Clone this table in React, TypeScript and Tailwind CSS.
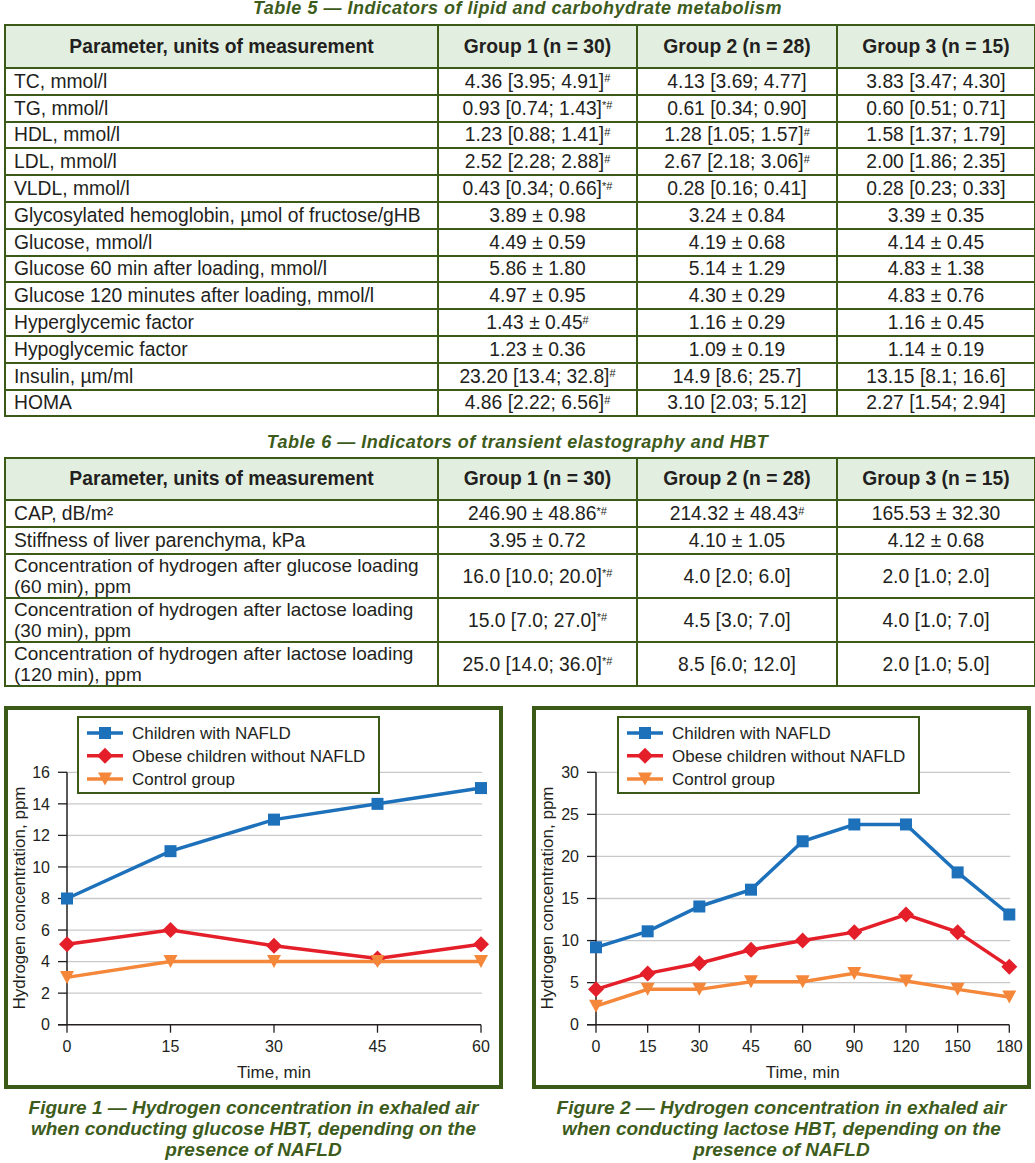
import React from 'react';

type Cell = [string, string?];
type Row = { label: React.ReactNode; cells: Cell[]; h: string; multi?: boolean };

const table5: Row[] = [
  { label: 'TC, mmol/l', cells: [['4.36 [3.95; 4.91]', '#'], ['4.13 [3.69; 4.77]'], ['3.83 [3.47; 4.30]']], h: 'h-[26.8px]' },
  { label: 'TG, mmol/l', cells: [['0.93 [0.74; 1.43]', '*#'], ['0.61 [0.34; 0.90]'], ['0.60 [0.51; 0.71]']], h: 'h-[26.8px]' },
  { label: 'HDL, mmol/l', cells: [['1.23 [0.88; 1.41]', '#'], ['1.28 [1.05; 1.57]', '#'], ['1.58 [1.37; 1.79]']], h: 'h-[26.8px]' },
  { label: 'LDL, mmol/l', cells: [['2.52 [2.28; 2.88]', '#'], ['2.67 [2.18; 3.06]', '#'], ['2.00 [1.86; 2.35]']], h: 'h-[26.8px]' },
  { label: 'VLDL, mmol/l', cells: [['0.43 [0.34; 0.66]', '*#'], ['0.28 [0.16; 0.41]'], ['0.28 [0.23; 0.33]']], h: 'h-[26.8px]' },
  { label: 'Glycosylated hemoglobin, µmol of fructose/gHB', cells: [['3.89 ± 0.98'], ['3.24 ± 0.84'], ['3.39 ± 0.35']], h: 'h-[26.8px]' },
  { label: 'Glucose, mmol/l', cells: [['4.49 ± 0.59'], ['4.19 ± 0.68'], ['4.14 ± 0.45']], h: 'h-[26.8px]' },
  { label: 'Glucose 60 min after loading, mmol/l', cells: [['5.86 ± 1.80'], ['5.14 ± 1.29'], ['4.83 ± 1.38']], h: 'h-[26.8px]' },
  { label: 'Glucose 120 minutes after loading, mmol/l', cells: [['4.97 ± 0.95'], ['4.30 ± 0.29'], ['4.83 ± 0.76']], h: 'h-[26.8px]' },
  { label: 'Hyperglycemic factor', cells: [['1.43 ± 0.45', '#'], ['1.16 ± 0.29'], ['1.16 ± 0.45']], h: 'h-[26.8px]' },
  { label: 'Hypoglycemic factor', cells: [['1.23 ± 0.36'], ['1.09 ± 0.19'], ['1.14 ± 0.19']], h: 'h-[26.8px]' },
  { label: 'Insulin, µm/ml', cells: [['23.20 [13.4; 32.8]', '#'], ['14.9 [8.6; 25.7]'], ['13.15 [8.1; 16.6]']], h: 'h-[26.8px]' },
  { label: 'HOMA', cells: [['4.86 [2.22; 6.56]', '#'], ['3.10 [2.03; 5.12]'], ['2.27 [1.54; 2.94]']], h: 'h-[26.8px]' },
];

const table6: Row[] = [
  { label: 'CAP, dB/m²', cells: [['246.90 ± 48.86', '*#'], ['214.32 ± 48.43', '#'], ['165.53 ± 32.30']], h: 'h-[27px]' },
  { label: 'Stiffness of liver parenchyma, kPa', cells: [['3.95 ± 0.72'], ['4.10 ± 1.05'], ['4.12 ± 0.68']], h: 'h-[27px]' },
  {
    label: <>Concentration of hydrogen after glucose loading<br />(60 min), ppm</>,
    cells: [['16.0 [10.0; 20.0]', '*#'], ['4.0 [2.0; 6.0]'], ['2.0 [1.0; 2.0]']],
    h: 'h-[44px]',
    multi: true,
  },
  {
    label: <>Concentration of hydrogen after lactose loading<br />(30 min), ppm</>,
    cells: [['15.0 [7.0; 27.0]', '*#'], ['4.5 [3.0; 7.0]'], ['4.0 [1.0; 7.0]']],
    h: 'h-[43px]',
    multi: true,
  },
  {
    label: <>Concentration of hydrogen after lactose loading<br />(120 min), ppm</>,
    cells: [['25.0 [14.0; 36.0]', '*#'], ['8.5 [6.0; 12.0]'], ['2.0 [1.0; 5.0]']],
    h: 'h-[44px]',
    multi: true,
  },
];

const DataTable = ({ rows, head }: { rows: Row[]; head: string }) => (
  <table className="ml-[4px] w-[1030px] table-fixed border-collapse text-[19.3px] leading-[18px] text-[#231f20]">
    <colgroup>
      <col className="w-[433px]" />
      <col className="w-[199px]" />
      <col className="w-[200px]" />
      <col className="w-[198px]" />
    </colgroup>
    <thead>
      <tr className={`${head} bg-[#e2efe0]`}>
        <th className="border-2 border-[#3b5a17] font-bold">Parameter, units of measurement</th>
        <th className="border-2 border-[#3b5a17] font-bold">Group 1 (n = 30)</th>
        <th className="border-2 border-[#3b5a17] font-bold">Group 2 (n = 28)</th>
        <th className="border-2 border-[#3b5a17] font-bold">Group 3 (n = 15)</th>
      </tr>
    </thead>
    <tbody>
      {rows.map((row, i) => (
        <tr key={i} className={row.h}>
          {row.multi ? (
            <td className="border-2 border-[#3b5a17] px-[8px] py-0 text-left text-[19px] leading-[21px]">{row.label}</td>
          ) : (
            <td className="border-2 border-[#3b5a17] px-[8px] pt-[1px] text-left">{row.label}</td>
          )}
          {row.cells.map(([value, mark], j) => (
            <td key={j} className="border-2 border-[#3b5a17] pt-[1px] text-center whitespace-nowrap">
              {value}
              {mark && <sup className="text-[11px]">{mark}</sup>}
            </td>
          ))}
        </tr>
      ))}
    </tbody>
  </table>
);

type Series = { color: string; marker: 'square' | 'diamond' | 'triangle'; label: string; values: number[] };

const Marker = ({ kind, x, y, color }: { kind: Series['marker']; x: number; y: number; color: string }) => {
  if (kind === 'square') return <rect x={x - 6} y={y - 6} width={12} height={12} fill={color} />;
  if (kind === 'diamond')
    return <polygon points={`${x},${y - 8} ${x + 8},${y} ${x},${y + 8} ${x - 8},${y}`} fill={color} />;
  return <polygon points={`${x - 7},${y - 6.5} ${x + 7},${y - 6.5} ${x},${y + 6.5}`} fill={color} />;
};

const BLUE = '#1d70ba';
const RED = '#e41f2a';
const ORANGE = '#f4873a';

type ChartProps = {
  axisX: number;
  xEnd: number;
  labelRight: number;
  yMax: number;
  yStep: number;
  xLabels: string[];
  legendX: number;
  series: Series[];
};

const Chart = ({ axisX, xEnd, labelRight, yMax, yStep, xLabels, legendX, series }: ChartProps) => {
  const y0 = 314.7;
  const yTop = 62.3;
  const sy = (v: number) => y0 - ((y0 - yTop) * v) / yMax;
  const dx = (xEnd - axisX) / (xLabels.length - 1);
  const sx = (i: number) => axisX + dx * i;
  const ticks: number[] = [];
  for (let v = 0; v <= yMax; v += yStep) ticks.push(v);

  return (
    <svg width={491} height={375} className="block" fontFamily="'Liberation Sans', Arial, sans-serif">
      {ticks.slice(1).map((v) => (
        <line key={v} x1={axisX} x2={xEnd + 1} y1={sy(v)} y2={sy(v)} stroke="#c9c9c9" strokeWidth={1.3} />
      ))}
      <line x1={axisX} x2={axisX} y1={yTop} y2={y0} stroke="#231f20" strokeWidth={1.5} />
      <line x1={axisX - 9} x2={xEnd} y1={y0} y2={y0} stroke="#231f20" strokeWidth={1.5} />
      {ticks.map((v) => (
        <g key={v}>
          <line x1={axisX - 9} x2={axisX} y1={sy(v)} y2={sy(v)} stroke="#231f20" strokeWidth={1.3} />
          <text x={labelRight} y={sy(v)} dy="0.36em" textAnchor="end" fontSize={16} fill="#231f20">
            {v}
          </text>
        </g>
      ))}
      {xLabels.map((l, i) => (
        <g key={l}>
          <line x1={sx(i)} x2={sx(i)} y1={y0} y2={y0 + 8} stroke="#231f20" strokeWidth={1.3} />
          <text x={sx(i)} y={336} dy="0.36em" textAnchor="middle" fontSize={16} fill="#231f20">
            {l}
          </text>
        </g>
      ))}
      <text x={(axisX + xEnd) / 2} y={362} dy="0.36em" textAnchor="middle" fontSize={17} fill="#231f20">
        Time, min
      </text>
      <text
        transform="translate(11,188) rotate(-90)"
        dy="0.36em"
        textAnchor="middle"
        fontSize={17}
        fill="#231f20"
      >
        Hydrogen concentration, ppm
      </text>
      {series.map((s) => (
        <g key={s.label}>
          <polyline
            points={s.values.map((v, i) => `${sx(i)},${sy(v)}`).join(' ')}
            fill="none"
            stroke={s.color}
            strokeWidth={3.5}
          />
          {s.values.map((v, i) => (
            <Marker key={i} kind={s.marker} x={sx(i)} y={sy(v)} color={s.color} />
          ))}
        </g>
      ))}
      {/* legend */}
      <rect x={legendX + 1} y={7} width={301} height={76} fill="#ffffff" stroke="#3b5a17" strokeWidth={2} />
      {series.map((s, i) => {
        const y = [23, 45.7, 69][i];
        return (
          <g key={s.label}>
            <line x1={legendX + 10} x2={legendX + 46} y1={y} y2={y} stroke={s.color} strokeWidth={3.5} />
            <Marker kind={s.marker} x={legendX + 28} y={y} color={s.color} />
            <text x={legendX + 55} y={y} dy="0.36em" fontSize={17} fill="#231f20">
              {s.label}
            </text>
          </g>
        );
      })}
    </svg>
  );
};

const Figure = ({ chart, caption }: { chart: ChartProps; caption: React.ReactNode }) => (
  <div className="flex w-[499px] flex-col">
    <div className="h-[383px] w-[499px] border-4 border-[#3b5a17] bg-white">
      <Chart {...chart} />
    </div>
    <p className="mt-[8px] text-center text-[19px] leading-[21px] font-bold italic text-[#3d5c1c]">{caption}</p>
  </div>
);

const labels = ['Children with NAFLD', 'Obese children without NAFLD', 'Control group'];

const fig1: ChartProps = {
  axisX: 59,
  xEnd: 473,
  labelRight: 42,
  yMax: 16,
  yStep: 2,
  xLabels: ['0', '15', '30', '45', '60'],
  legendX: 69,
  series: [
    { color: BLUE, marker: 'square', label: labels[0], values: [8, 11, 13, 14, 15] },
    { color: RED, marker: 'diamond', label: labels[1], values: [5.1, 6, 5, 4.2, 5.1] },
    { color: ORANGE, marker: 'triangle', label: labels[2], values: [3, 4, 4, 4, 4] },
  ],
};

const fig2: ChartProps = {
  axisX: 60,
  xEnd: 473.3,
  labelRight: 43,
  yMax: 30,
  yStep: 5,
  xLabels: ['0', '15', '30', '45', '60', '90', '120', '150', '180'],
  legendX: 81,
  series: [
    { color: BLUE, marker: 'square', label: labels[0], values: [9.2, 11.1, 14.05, 16.05, 21.8, 23.8, 23.8, 18.1, 13.1] },
    { color: RED, marker: 'diamond', label: labels[1], values: [4.2, 6.1, 7.3, 8.9, 10, 11, 13.1, 11, 6.9] },
    { color: ORANGE, marker: 'triangle', label: labels[2], values: [2.2, 4.2, 4.2, 5.1, 5.1, 6.1, 5.2, 4.2, 3.3] },
  ],
};

const Caption = ({ children, className }: { children: React.ReactNode; className: string }) => (
  <div className={`text-center text-[18px] leading-[17px] font-bold italic tracking-[0.5px] text-[#3d5c1c] ${className}`}>
    {children}
  </div>
);

export default function App() {
  return (
    <div className="w-[1035px] bg-white pb-[6px] font-['Liberation_Sans',Arial,sans-serif]">
      <Caption className="pt-[0px] pb-[7px]">Table 5 — Indicators of lipid and carbohydrate metabolism</Caption>
      <DataTable rows={table5} head="h-[43px]" />
      <Caption className="pt-[17px] pb-[6px]">Table 6 — Indicators of transient elastography and HBT</Caption>
      <DataTable rows={table6} head="h-[42px]" />
      <div className="mt-[19px] flex gap-[29px] pl-[4px]">
        <Figure
          chart={fig1}
          caption={
            <>
              Figure 1 — Hydrogen concentration in exhaled air
              <br />
              when conducting glucose HBT, depending on the
              <br />
              presence of NAFLD
            </>
          }
        />
        <Figure
          chart={fig2}
          caption={
            <>
              Figure 2 — Hydrogen concentration in exhaled air
              <br />
              when conducting lactose HBT, depending on the
              <br />
              presence of NAFLD
            </>
          }
        />
      </div>
    </div>
  );
}
